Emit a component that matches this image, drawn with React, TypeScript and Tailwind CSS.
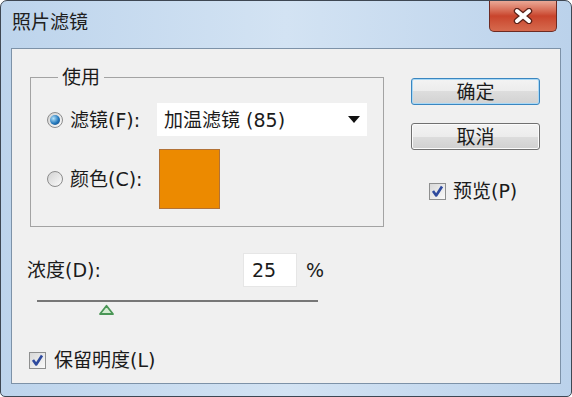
function Radio({ checked }: { checked?: boolean }) {
  return (
    <span className="w-[16px] h-[16px] rounded-full border border-[#8c8c8c] bg-gradient-to-br from-[#d2d2d2] to-[#fbfbfb] flex items-center justify-center shrink-0">
      {checked && (
        <span className="w-[10px] h-[10px] rounded-full bg-[radial-gradient(circle_at_35%_35%,#b5e3fb,#2277bb_55%,#173f72)]" />
      )}
    </span>
  );
}

function Checkbox() {
  return (
    <span className="w-[17px] h-[17px] border border-[#8e8f8f] bg-gradient-to-br from-[#d8d8d8] to-[#fafafa] flex items-center justify-center shrink-0">
      <svg width="13" height="13" viewBox="0 0 13 13">
        <path d="M2 6 L5.2 10.5 L11 1.5" fill="none" stroke="#2e4a9e" strokeWidth="2.6" strokeLinejoin="round" />
      </svg>
    </span>
  );
}

export default function App() {
  return (
    <div className="w-[572px] h-[397px] bg-white font-['DejaVu_Sans','Noto_Sans_CJK_SC',sans-serif] text-[#1b1b1b]">
      <div className="w-full h-full rounded-t-[7px] rounded-b-[5px] border border-[#3e4753] bg-gradient-to-r from-[#bdd4ec] via-[#d3e3f3] to-[#bbd2eb] flex flex-col">
        {/* title bar */}
        <div className="h-[47px] flex items-start justify-between pl-[11px] pr-[14px]">
          <span className="mt-[8px] text-[19px] leading-[26px] text-[#202020]">照片滤镜</span>
          <div className="w-[68px] h-[31px] rounded-b-[5px] border border-t-0 border-[#6d2a22] bg-gradient-to-b from-[#e9a896] via-[#c9442c] to-[#d66a4e] flex items-center justify-center">
            <svg width="22" height="16" viewBox="0 0 22 16">
              <path d="M5 3 L17 13 M17 3 L5 13" stroke="#5a2219" strokeWidth="6.4" strokeLinecap="round" />
              <path d="M5 3 L17 13 M17 3 L5 13" stroke="#ffffff" strokeWidth="4" strokeLinecap="round" />
            </svg>
          </div>
        </div>

        {/* content */}
        <div className="mx-[10px] h-[336px] border border-[#7d92a8] bg-[#f0f0f0] flex text-[19px]">
          {/* left column */}
          <div className="pl-[15px] pt-[28px] flex flex-col">
            <div className="relative ml-[3px] w-[354px] h-[150px] border border-[#a3a3a3] pl-[16px] pt-[25px] flex flex-col">
              <span className="absolute left-[27px] top-[-14px] px-[4px] bg-[#f0f0f0] leading-[26px]">使用</span>
              <div className="flex items-center h-[33px]">
                <div className="w-[110px] flex items-center gap-[7px]">
                  <Radio checked />
                  <span className="leading-[26px]">滤镜(F):</span>
                </div>
                <div className="w-[210px] h-[33px] bg-white flex items-center justify-between pl-[7px] pr-[7px]">
                  <span className="leading-[26px]">加温滤镜 (85)</span>
                  <svg width="12" height="7" viewBox="0 0 12 7">
                    <path d="M0 0 H12 L6 7 Z" fill="#111" />
                  </svg>
                </div>
              </div>
              <div className="flex items-center mt-[13px]">
                <div className="w-[112px] flex items-center gap-[7px]">
                  <Radio />
                  <span className="leading-[26px]">颜色(C):</span>
                </div>
                <div className="w-[61px] h-[60px] bg-[#ec8a00] border border-[#b27236]" />
              </div>
            </div>

            <div className="mt-[26px] flex items-center">
              <span className="w-[216px] leading-[26px]">浓度(D):</span>
              <div className="w-[54px] h-[34px] bg-white border border-[#e6e6e6] flex items-center pl-[8px]">
                <span className="leading-[26px]">25</span>
              </div>
              <span className="ml-[9px] leading-[26px]">%</span>
            </div>

            <div className="mt-[13px] ml-[10px] relative w-[281px] h-[2px] bg-[#777777]">
              <svg className="absolute left-[61px] top-[4px]" width="17" height="12" viewBox="0 0 17 12">
                <path d="M2 10 L8.5 1.8 L15 10 Z" fill="#d4ecd2" stroke="#4a9656" strokeWidth="1.8" strokeLinejoin="round" />
              </svg>
            </div>

            <div className="mt-[45px] ml-[2px] flex items-center gap-[8px]">
              <Checkbox />
              <span className="leading-[26px]">保留明度(L)</span>
            </div>
          </div>

          {/* right column */}
          <div className="ml-[27px] pt-[29px] flex flex-col">
            <div className="w-[129px] h-[27px] rounded-[3px] border border-[#3a86c0] shadow-[inset_0_0_0_1px_#a9d8f5] bg-[linear-gradient(#f3f3f3,#ececec_50%,#dddddd_50%,#d2d2d2)] flex items-center justify-center">
              <span className="text-[19px] leading-[24px]">确定</span>
            </div>
            <div className="mt-[18px] w-[129px] h-[27px] rounded-[3px] border border-[#707070] shadow-[inset_0_0_0_1px_#fbfbfb] bg-[linear-gradient(#f3f3f3,#ececec_50%,#dddddd_50%,#d0d0d0)] flex items-center justify-center">
              <span className="text-[19px] leading-[24px]">取消</span>
            </div>
            <div className="mt-[28px] ml-[18px] flex items-center gap-[7px]">
              <Checkbox />
              <span className="leading-[26px]">预览(P)</span>
            </div>
          </div>
        </div>
      </div>
    </div>
  );
}
